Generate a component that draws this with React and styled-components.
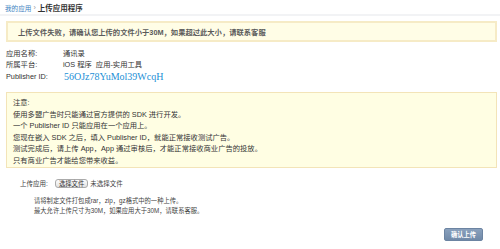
import React from 'react'
import styled, {createGlobalStyle} from 'styled-components'

const GlobalStyle = createGlobalStyle`
    html, body {
        margin: 0;
        padding: 0;
        background: #fff;
        width: 500px;
        height: 249px;
        overflow: hidden;
    }
    body {
        font-family: "Liberation Sans", "Noto Sans CJK SC", sans-serif;
        color: #333;
    }
`;

const notices = [
    '注意:',
    '使用多盟广告时只能通过官方提供的 SDK 进行开发。',
    '一个 Publisher ID 只能应用在一个应用上。',
    '您现在嵌入 SDK 之后，填入 Publisher ID，就能正常接收测试广告。',
    '测试完成后，请上传 App，App 通过审核后，才能正常接收商业广告的投放。',
    '只有商业广告才能给您带来收益。'
]

const App = () => {
    return(
        <Page>
            <GlobalStyle />
            <Crumbs>
                <CrumbLink>我的应用</CrumbLink>
                <Sep>›</Sep>
                <Title>上传应用程序</Title>
            </Crumbs>
            <Content>
                <ErrorBox>上传文件失败，请确认您上传的文件小于30M，如果超过此大小，请联系客服</ErrorBox>
                <InfoTable>
                    <InfoRow>
                        <Label>应用名称:</Label>
                        <Value>通讯录</Value>
                    </InfoRow>
                    <InfoRow>
                        <Label>所属平台:</Label>
                        <Value>iOS 程序&nbsp;&nbsp;应用-实用工具</Value>
                    </InfoRow>
                    <InfoRow tall>
                        <Label>Publisher ID:</Label>
                        <PubId>56OJz78YuMol39WcqH</PubId>
                    </InfoRow>
                </InfoTable>
                <Notice>
                    {notices.map((n, i) => <NoticeLine key={i}>{n}</NoticeLine>)}
                </Notice>
                <UploadRow>
                    <UploadLabel>上传应用:</UploadLabel>
                    <FileButton>选择文件</FileButton>
                    <FileName>未选择文件</FileName>
                </UploadRow>
                <Hints>
                    <div>请将制定文件打包成rar，zip，gz格式中的一种上传。</div>
                    <div>最大允许上传尺寸为30M，如果应用大于30M，请联系客服。</div>
                </Hints>
                <Footer>
                    <Submit>确认上传</Submit>
                </Footer>
            </Content>
        </Page>
    )
}

export default App

const Page = styled.div`
    width: 500px;
    height: 249px;
    display: flex;
    flex-direction: column;
`;

const Crumbs = styled.div`
    height: 16px;
    display: flex;
    align-items: center;
    padding: 1px 0 0 5px;
    box-sizing: border-box;
    border-bottom: 2px solid #f2f3f5;
`;

const CrumbLink = styled.a`
    font-size: 6.6px;
    color: #3d7fc1;
`;

const Sep = styled.span`
    font-size: 7px;
    color: #999;
    margin: 0 2px;
`;

const Title = styled.span`
    font-size: 7.5px;
    font-weight: bold;
    color: #333;
`;

const Content = styled.div`
    display: flex;
    flex-direction: column;
    padding: 0 3px 0 6px;
`;

const ErrorBox = styled.div`
    margin-top: 5px;
    height: 21px;
    box-sizing: border-box;
    border: 2px solid #f6ebc6;
    background: #fffde6;
    padding-left: 10px;
    display: flex;
    align-items: center;
    font-size: 7.3px;
    font-weight: bold;
    color: #5a5a5a;
`;

const InfoTable = styled.div`
    margin-top: 5px;
    display: flex;
    flex-direction: column;
`;

const InfoRow = styled.div`
    display: flex;
    align-items: center;
    height: ${props => props.tall ? '15px' : '11px'};
    font-size: 7.3px;
`;

const Label = styled.div`
    width: 57px;
    flex-shrink: 0;
    color: #333;
`;

const Value = styled.div`
    color: #333;
`;

const PubId = styled.div`
    font-family: "Liberation Serif", serif;
    font-size: 10px;
    color: #1b8fd6;
    padding-left: 1px;
`;

const Notice = styled.div`
    margin-top: 8px;
    border: 1px solid #f3e4b8;
    background: #fffee3;
    padding: 4px 6px 1px;
    font-size: 7.3px;
    line-height: 11.5px;
    color: #333;
`;

const NoticeLine = styled.div`
    white-space: nowrap;
`;

const UploadRow = styled.div`
    margin-top: 10px;
    padding-left: 14px;
    display: flex;
    align-items: center;
    height: 10px;
    font-size: 6.5px;
    color: #444;
`;

const UploadLabel = styled.span`
    width: 35px;
`;

const FileButton = styled.span`
    height: 9px;
    box-sizing: border-box;
    padding: 0 3px;
    display: flex;
    align-items: center;
    border: 1px solid #aaa;
    border-radius: 3px;
    background: linear-gradient(#fdfdfd, #e2e2e2);
    color: #333;
    font-size: 6.3px;
`;

const FileName = styled.span`
    margin-left: 2px;
`;

const Hints = styled.div`
    margin-top: 8px;
    padding-left: 28px;
    font-size: 6.3px;
    line-height: 9.5px;
    color: #444;
`;

const Footer = styled.div`
    display: flex;
    justify-content: flex-end;
    padding-right: 14px;
    margin-top: 13px;
`;

const Submit = styled.button`
    width: 39px;
    height: 13px;
    padding: 0;
    border: 1px solid #6c84a2;
    border-radius: 2px;
    background: linear-gradient(#8aa1bd, #7089a8);
    color: #fff;
    font-family: "Liberation Sans", "Noto Sans CJK SC", sans-serif;
    font-size: 6.3px;
    font-weight: bold;
`;
